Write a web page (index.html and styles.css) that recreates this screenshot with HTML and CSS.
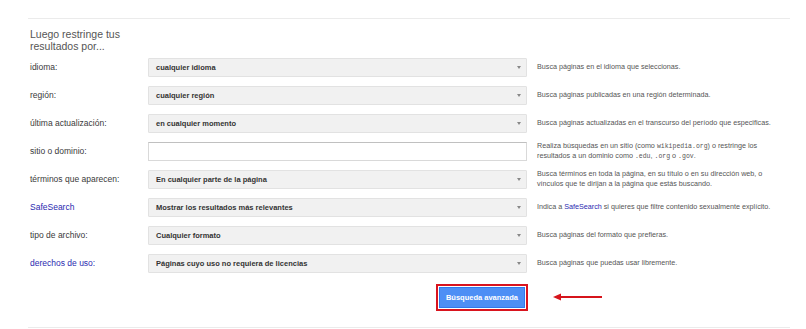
FILE: index.html
```html
<!DOCTYPE html>
<html lang="es">
<head>
  <meta charset="UTF-8" />
  <title>Búsqueda avanzada</title>
  <link rel="stylesheet" href="styles.css">
</head>
<body>
  <div class="panel">
    <h2>Luego restringe tus<br>resultados por...</h2>

    <div class="form-grid">
      <label>idioma:</label>
      <div class="select"><span>cualquier idioma</span><i class="arrow"></i></div>
      <p class="hint">Busca páginas en el idioma que seleccionas.</p>

      <label>región:</label>
      <div class="select"><span>cualquier región</span><i class="arrow"></i></div>
      <p class="hint">Busca páginas publicadas en una región determinada.</p>

      <label>última actualización:</label>
      <div class="select"><span>en cualquier momento</span><i class="arrow"></i></div>
      <p class="hint">Busca páginas actualizadas en el transcurso del período que especificas.</p>

      <label>sitio o dominio:</label>
      <div class="text-input"></div>
      <p class="hint">Realiza búsquedas en un sitio (como <code>wikipedia.org</code>) o restringe los resultados a un dominio como <code>.edu</code>, <code>.org</code> o <code>.gov</code>.</p>

      <label>términos que aparecen:</label>
      <div class="select"><span>En cualquier parte de la página</span><i class="arrow"></i></div>
      <p class="hint">Busca términos en toda la página, en su título o en su dirección web, o vínculos que te dirijan a la página que estás buscando.</p>

      <label class="link">SafeSearch</label>
      <div class="select"><span>Mostrar los resultados más relevantes</span><i class="arrow"></i></div>
      <p class="hint">Indica a <a href="#">SafeSearch</a> si quieres que filtre contenido sexualmente explícito.</p>

      <label>tipo de archivo:</label>
      <div class="select"><span>Cualquier formato</span><i class="arrow"></i></div>
      <p class="hint">Busca páginas del formato que prefieras.</p>

      <label class="link">derechos de uso:</label>
      <div class="select"><span>Páginas cuyo uso no requiera de licencias</span><i class="arrow"></i></div>
      <p class="hint">Busca páginas que puedas usar libremente.</p>

      <div class="submit-cell">
        <div class="highlight"><button type="button">Búsqueda avanzada</button></div>
      </div>
      <div class="arrow-cell">
        <svg width="50" height="8" viewBox="0 0 50 8">
          <line x1="6" y1="4" x2="49" y2="4" stroke="#d6141b" stroke-width="2"/>
          <polygon points="0,4 8,0.5 8,7.5" fill="#d6141b"/>
        </svg>
      </div>
    </div>
  </div>
</body>
</html>
```

FILE: styles.css
```css
body {
  margin: 0;
  background: #ffffff;
  font-family: Arial, "Liberation Sans", sans-serif;
  color: #222;
}

.panel {
  margin: 18px 16px 0 28px;
  padding: 0 0 22px 2px;
  border-top: 1px solid #ebebeb;
  border-bottom: 1px solid #ebebeb;
}

h2 {
  margin: 0;
  padding-top: 9px;
  font-size: 10.5px;
  line-height: 12px;
  font-weight: normal;
  color: #555;
}

.form-grid {
  display: grid;
  grid-template-columns: 108px 379px 1fr;
  grid-auto-rows: 28px;
  column-gap: 10px;
  align-items: center;
  margin-top: 1px;
}

label {
  font-size: 8.5px;
  color: #3a3a3a;
}

label.link {
  color: #2a2ab0;
}

.select {
  height: 19px;
  box-sizing: border-box;
  background: #f1f1f1;
  border: 1px solid #e2e2e2;
  border-radius: 1px;
  display: flex;
  align-items: center;
  justify-content: space-between;
  padding: 0 5px 0 7px;
  font-size: 7.5px;
  font-weight: bold;
  color: #333;
}

.arrow {
  width: 0;
  height: 0;
  border-left: 2px solid transparent;
  border-right: 2px solid transparent;
  border-top: 3px solid #888;
}

.text-input {
  height: 19px;
  box-sizing: border-box;
  background: #fff;
  border: 1px solid #d9d9d9;
  border-top-color: #c0c0c0;
}

.hint {
  margin: 0;
  max-width: 245px;
  font-size: 7.2px;
  line-height: 10px;
  color: #555;
}

.hint code {
  font-family: "Liberation Mono", monospace;
  font-size: 6.5px;
  line-height: 1;
}

.hint a {
  color: #2a2ab0;
  text-decoration: none;
}

.submit-cell {
  grid-column: 2;
  justify-self: end;
  margin-top: 12px;
}

.highlight {
  border: 2px solid #d9141e;
  padding: 1px;
  margin-right: -1px;
}

.highlight button {
  display: block;
  width: 86px;
  height: 21px;
  border: 1px solid #3079ed;
  background: #4d8ff5;
  color: #fff;
  font-family: Arial, "Liberation Sans", sans-serif;
  font-size: 7.5px;
  font-weight: bold;
  padding: 0;
}

.arrow-cell {
  grid-column: 3;
  margin: 12px 0 0 16px;
}

.arrow-cell svg {
  display: block;
}
```
